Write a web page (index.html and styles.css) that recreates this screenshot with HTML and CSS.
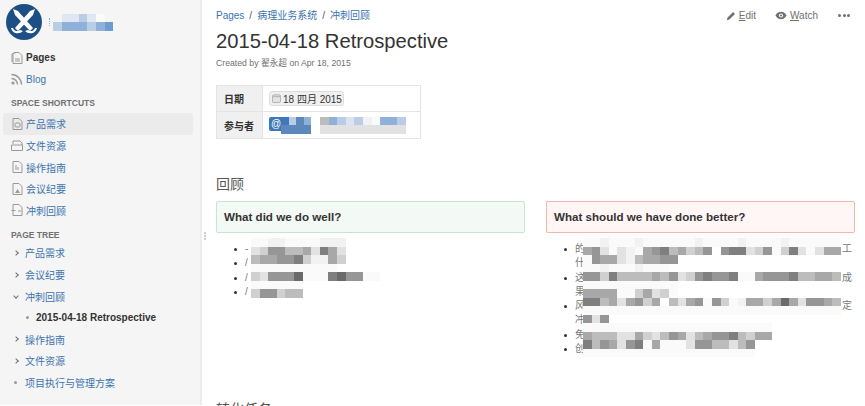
FILE: index.html
```html
<!DOCTYPE html>
<html>
<head>
  <title>2015-04-18 Retrospective</title>
  <link rel="stylesheet" href="styles.css">
</head>
<body>
  <div class="sidebar">
    <div class="space-header">
      <svg class="space-logo" viewBox="0 0 36 36">
        <circle cx="18" cy="18" r="18" fill="#1d4f84"/>
        <path d="M7 5 L12 7 L27 24 L24 27 L9 11 Z" fill="#fff"/>
        <path d="M29 5 L24 7 L9 24 L12 27 L27 11 Z" fill="#fff"/>
        <path d="M5 24 C7 31 14 30 17 27 L14 26 C11 28 8 27 7 24 Z" fill="#fff"/>
        <path d="M31 24 C29 31 22 30 19 27 L22 26 C25 28 28 27 29 24 Z" fill="#fff"/>
      </svg>
      <span class="logo-dots"></span>
      <span class="mosaic" data-rows="-aaca1-|cbbbcbe"></span>
    </div>

    <a class="nav-row current-nav">
      <svg class="nav-icon" viewBox="0 0 14 14"><path d="M4 1.5h5l3 3v8H3V3z M6 1.5 2 3v8" class="icon-line"/><path d="M5 8h5M5 10h5" class="icon-line"/></svg>
      Pages
    </a>
    <a class="nav-row">
      <svg class="nav-icon" viewBox="0 0 14 14"><circle cx="3" cy="11" r="1.6" fill="#999"/><path d="M1.5 6.5a6 6 0 0 1 6 6M1.5 2.5a10 10 0 0 1 10 10" class="icon-line wide"/></svg>
      Blog
    </a>

    <div class="side-label">SPACE SHORTCUTS</div>
    <a class="nav-row selected">
      <svg class="nav-icon" viewBox="0 0 14 14"><path d="M3 1.5h6l3 3v8H3z" class="icon-line"/><rect x="5" y="6" width="5" height="4" rx="1" class="icon-line"/></svg>
      产品需求
    </a>
    <a class="nav-row">
      <svg class="nav-icon" viewBox="0 0 14 14"><path d="M3 5V2h7l2 2v2" class="icon-line"/><path d="M1.5 6h11v5.500h-11z" class="icon-line" fill="#eee"/></svg>
      文件资源
    </a>
    <a class="nav-row">
      <svg class="nav-icon" viewBox="0 0 14 14"><path d="M3 1.500h6l3 3v8H3z" class="icon-line"/><path d="M6 5v5M8 7v3" class="icon-line"/></svg>
      操作指南
    </a>
    <a class="nav-row">
      <svg class="nav-icon" viewBox="0 0 14 14"><path d="M3 1.500h6l3 3v8H3z" class="icon-line"/><path d="M5 11l2.500-4 2.500 4z" fill="#999"/></svg>
      会议纪要
    </a>
    <a class="nav-row">
      <svg class="nav-icon" viewBox="0 0 14 14"><path d="M3 1.500h6l3 3v8H3z" class="icon-line"/><path d="M1.500 7.500h4M8 8h3" class="icon-line"/></svg>
      冲刺回顾
    </a>

    <div class="side-label tree-label">PAGE TREE</div>
    <a class="tree-row"><span class="chevron"></span>产品需求</a>
    <a class="tree-row"><span class="chevron"></span>会议纪要</a>
    <a class="tree-row"><span class="chevron open"></span>冲刺回顾</a>
    <a class="tree-row child-row"><span class="dot"></span>2015-04-18 Retrospective</a>
    <a class="tree-row"><span class="chevron"></span>操作指南</a>
    <a class="tree-row"><span class="chevron"></span>文件资源</a>
    <a class="tree-row"><span class="dot leaf-dot"></span>项目执行与管理方案</a>
  </div>

  <div class="main">
    <span class="grip"></span>
    <div class="topbar">
      <div class="breadcrumbs">
        <a>Pages</a><span class="sep">/</span><a>病理业务系统</a><span class="sep">/</span><a>冲刺回顾</a>
      </div>
      <div class="page-actions">
        <span class="action">
          <svg class="action-icon" viewBox="0 0 12 12"><path d="M1 11l.7-3L8.500 1.200l2.300 2.300L4 10.300z" fill="#707070"/></svg>
          <span><u>E</u>dit</span>
        </span>
        <span class="action watch">
          <svg class="eye-icon" viewBox="0 0 14 10"><path d="M.5 5C2.500 1.500 4.800.7 7 .7s4.500.8 6.500 4.300C11.500 8.500 9.200 9.300 7 9.300S2.500 8.500.5 5z" fill="#707070"/><circle cx="7" cy="5" r="2.400" fill="#fff"/><circle cx="7" cy="5" r="1.200" fill="#707070"/></svg>
          <span><u>W</u>atch</span>
        </span>
        <span class="more"><i></i><i></i><i></i></span>
      </div>
    </div>

    <h1 class="page-title">2015-04-18 Retrospective</h1>
    <div class="byline">Created by 翟永超 on Apr 18, 2015</div>

    <table class="meta-table">
      <tr>
        <th>日期</th>
        <td>
          <span class="date-chip">
            <svg class="cal-icon" viewBox="0 0 10 10"><rect x=".5" y="1" width="9" height="8.500" rx="1.500" fill="#e4e4e4" stroke="#aaa"/><path d="M1 3h8" stroke="#aaa"/></svg>
            18 四月 2015
          </span>
        </td>
      </tr>
      <tr>
        <th>参与者</th>
        <td>
          <div class="people">
            <span class="mention">@</span>
            <span class="mosaic name-one" data-rows="gcdb|dddd"></span>
            <span class="mosaic name-two" data-rows="5bcfc21bbc|3333333333"></span>
          </div>
        </td>
      </tr>
    </table>

    <h2 class="section-title">回顾</h2>

    <div class="columns">
      <div class="col">
        <div class="panel panel-good">What did we do well?</div>
        <ul class="points">
          <li><span>-</span></li>
          <li><span>/</span></li>
          <li><span>/</span></li>
          <li><span>/</span></li>
        </ul>
        <span class="mosaic over good-cover" data-rows="11221111222|34775563863|56677842264|1111111111|437779111897711|111111|477455"></span>
      </div>
      <div class="col">
        <div class="panel panel-bad">What should we have done better?</div>
        <ul class="points">
          <li><span class="line-ends"><span>的</span><span>工</span></span><span>什</span></li>
          <li><span class="line-ends"><span>这</span><span>成</span></span><span>果</span></li>
          <li><span class="line-ends"><span>风</span><span>定</span></span><span>冲</span></li>
          <li><span>免</span></li>
          <li><span>创</span></li>
        </ul>
        <span class="mosaic over bad-cover" data-rows="112111211111121111211112111111|673132167856457078834714831366|17663256677|11211121110|774855556573478778116777855665|11111111111|66661146341|885636746053671741266469637765|111111111111111111111111111111|737|1111111111111111111111|6555336435763567785466|85763781611137755357|11111111111111111111"></span>
      </div>
    </div>

    <h2 class="section-title">转化任务</h2>
  </div>

  <script src="mosaic.js"></script>
</body>
</html>
```

FILE: styles.css
```css
body {
  margin: 0;
  height: 406px;
  overflow: hidden;
  display: flex;
  font-family: "Liberation Sans", "Noto Sans CJK SC", sans-serif;
  font-size: 10px;
  color: #333;
  background-color: white;
}

a {
  color: #3b73af;
}

.sidebar {
  flex: none;
  width: 202px;
  height: 405px;
  padding-top: 4px;
  box-sizing: border-box;
  background-color: #f5f5f5;
  border-right: 2px solid #ececec;
}

.space-header {
  display: flex;
  align-items: center;
  height: 36px;
  margin-bottom: 7px;
  padding-left: 6px;
}

.space-logo {
  width: 36px;
  height: 36px;
}

.logo-dots {
  width: 0;
  height: 8px;
  margin-left: 7px;
  margin-right: 3px;
  border-left: 1px dotted #8fb0d8;
}

.nav-row {
  display: flex;
  align-items: center;
  gap: 2px;
  height: 21.6px;
  margin: 0 7px 0 3px;
  padding-left: 7px;
}

.nav-row.selected {
  background-color: #ebebeb;
  border-radius: 2px;
}

.current-nav {
  color: #333;
  font-weight: bold;
}

.nav-icon {
  width: 14px;
  height: 14px;
}

.icon-line {
  fill: none;
  stroke: #999;
  stroke-width: 1;
}

.icon-line.wide {
  stroke-width: 1.4;
}

.side-label {
  height: 23px;
  padding: 8px 0 0 11px;
  box-sizing: border-box;
  font-size: 8.5px;
  font-weight: bold;
  color: #707070;
}

.tree-label {
  height: 21px;
  padding-top: 9px;
}

.tree-row {
  display: flex;
  align-items: center;
  height: 21.6px;
  padding-left: 14px;
}

.chevron {
  width: 4px;
  height: 4px;
  margin-right: 7px;
  box-sizing: border-box;
  border-top: 1px solid #707070;
  border-right: 1px solid #707070;
  transform: rotate(45deg);
}

.chevron.open {
  transform: rotate(135deg);
}

.dot {
  width: 3px;
  height: 3px;
  margin-right: 7px;
  border-radius: 50%;
  background-color: #999;
}

.leaf-dot {
  margin-right: 8px;
}

.child-row {
  padding-left: 26px;
  color: #333;
  font-weight: bold;
}

.main {
  position: relative;
  flex: 1;
  min-width: 0;
  padding: 8px 10px 0 14px;
}

.grip {
  position: absolute;
  left: 2px;
  top: 232px;
  width: 2px;
  height: 8px;
  border-left: 2px dotted #ccc;
}

.topbar {
  display: flex;
  justify-content: space-between;
  height: 15px;
  line-height: 15px;
}

.breadcrumbs .sep {
  margin: 0 5px;
  color: #555;
}

.page-actions {
  display: flex;
  align-items: center;
  padding-right: 5px;
  color: #707070;
}

.action {
  display: flex;
  align-items: center;
  gap: 3px;
}

.action-icon {
  width: 10px;
  height: 10px;
}

.eye-icon {
  width: 12px;
  height: 9px;
}

.watch {
  margin-left: 19px;
}

.more {
  display: flex;
  gap: 1.5px;
  margin-left: 20px;
}

.more i {
  width: 3px;
  height: 3px;
  border-radius: 50%;
  background-color: #707070;
}

.page-title {
  margin: 5px 0 0;
  font-size: 20.2px;
  line-height: 26px;
  font-weight: normal;
  color: #333;
}

.byline {
  margin-top: 4px;
  line-height: 10px;
  font-size: 8.7px;
  color: #707070;
}

.meta-table {
  margin-top: 17px;
  width: 205px;
  border-collapse: collapse;
}

.meta-table th,
.meta-table td {
  border: 1px solid #e4e4e4;
  padding: 0 6px;
}

.meta-table th {
  padding-left: 7px;
}

.meta-table tr:first-child th,
.meta-table tr:first-child td {
  height: 25px;
}

.meta-table tr:last-child th,
.meta-table tr:last-child td {
  height: 26px;
}

.meta-table th {
  width: 32px;
  text-align: left;
  background-color: #f0f0f0;
  color: #333;
}

.date-chip {
  display: inline-flex;
  align-items: center;
  gap: 2px;
  height: 13px;
  padding: 0 1px 0 2px;
  background-color: #f0f0f0;
  border: 1px solid #ddd;
  border-radius: 3px;
}

.cal-icon {
  width: 9px;
  height: 9px;
}

.people {
  display: flex;
  align-items: flex-start;
}

.mention {
  flex: none;
  width: 16px;
  height: 14px;
  padding-left: 2px;
  box-sizing: border-box;
  line-height: 14px;
  color: #fff;
  background-color: #3f77b8;
  border-radius: 2px 0 0 2px;
}

.section-title {
  margin: 35px 0 0;
  font-size: 14px;
  line-height: 20px;
  font-weight: normal;
  color: #555;
}

.columns {
  display: grid;
  grid-template-columns: 309px 309px;
  gap: 21px;
  height: 198px;
  margin-top: 7px;
}

.columns + .section-title {
  margin-top: 0;
}

.col {
  position: relative;
}

.panel {
  height: 32px;
  padding-left: 7px;
  box-sizing: border-box;
  line-height: 30px;
  font-size: 11.6px;
  font-weight: bold;
  border-radius: 2px;
}

.panel-good {
  background-color: #f3f9f4;
  border: 1px solid #c6e6cd;
}

.panel-bad {
  background-color: #fff6f5;
  border: 1px solid #f3b5ad;
}

.points {
  margin: 9px 0 0;
  padding: 0 0 0 29px;
  list-style: none;
  line-height: 14.3px;
  color: #777;
}

.points li {
  position: relative;
}

.points li::before {
  content: "";
  position: absolute;
  left: -11px;
  top: 6px;
  width: 3px;
  height: 3px;
  border-radius: 50%;
  background-color: #333;
}

.points li > span {
  display: block;
}

.points .line-ends {
  display: flex;
  justify-content: space-between;
  padding-right: 3px;
}

.mosaic {
  display: inline-flex;
  flex-direction: column;
}

.mosaic .m-row {
  display: flex;
  height: 8.5px;
}

.mosaic .m-row span {
  width: 8.6px;
  height: 100%;
}

.mosaic.over {
  position: absolute;
  top: 37px;
}

.name-one {
  margin-left: -4px;
}

.mosaic.name-one .m-row span {
  width: 7.5px;
}

.name-two {
  margin-left: 9px;
}

.good-cover {
  left: 35px;
}

.bad-cover {
  left: 37px;
}

.m-1 { background-color: #fafafa; }
.m-2 { background-color: #f2f2f2; }
.m-3 { background-color: #e2e2e2; }
.m-4 { background-color: #d0d0d0; }
.m-5 { background-color: #bcbcbc; }
.m-6 { background-color: #a8a8a8; }
.m-7 { background-color: #969696; }
.m-8 { background-color: #7f7f7f; }
.m-9 { background-color: #6a6a6a; }
.m-a { background-color: #dfe8f2; }
.m-b { background-color: #8fb0d8; }
.m-c { background-color: #b9cde6; }
.m-d { background-color: #5c88bc; }
.m-e { background-color: #6f9ccf; }
.m-f { background-color: #dce4f0; }
.m-g { background-color: #3f77b8; }
```

FILE: mosaic.js
```js
// redacted names in the screenshot are pixel blocks, one character per cell
document.querySelectorAll('.mosaic').forEach(function (block) {
  block.dataset.rows.split('|').forEach(function (row) {
    var line = document.createElement('div');
    line.className = 'm-row';
    row.split('').forEach(function (level) {
      var cell = document.createElement('span');
      if (level !== '0' && level !== '-') {
        cell.className = 'm-' + level;
      }
      line.appendChild(cell);
    });
    block.appendChild(line);
  });
});
```
